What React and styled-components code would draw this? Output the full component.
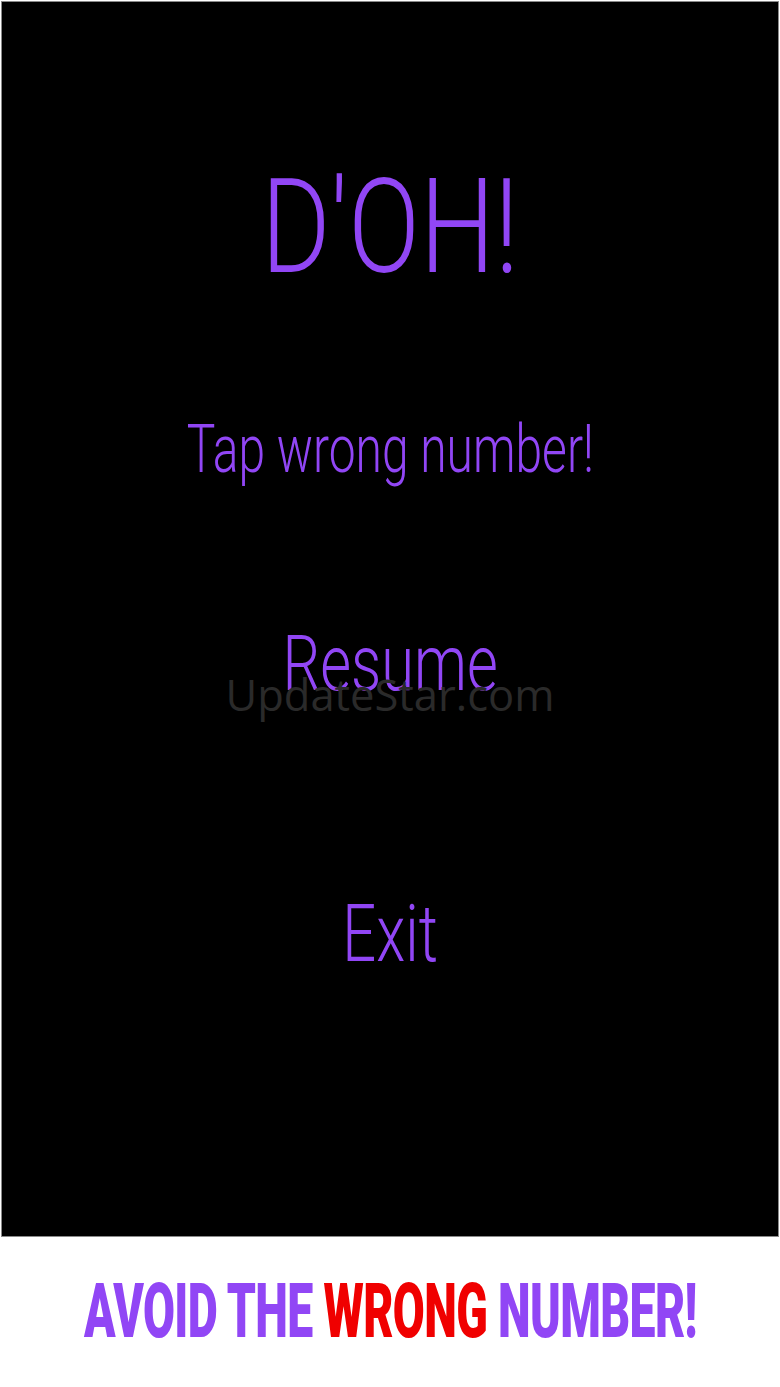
import React from "react";
import styled, { createGlobalStyle } from "styled-components";

const Global = createGlobalStyle`
  html, body { margin: 0; padding: 0; background: #ffffff; }
  body { width: 780px; height: 1387px; overflow: hidden; }
`;

const Page = styled.div`
  width: 780px;
  height: 1387px;
  display: flex;
  flex-direction: column;
  background: #ffffff;
`;

const Panel = styled.div`
  position: relative;
  margin: 1px 1px 0 1px;
  height: 1236px;
  box-sizing: border-box;
  border: 1px solid #8a8a8a;
  background: #000000;
  display: flex;
  flex-direction: column;
  align-items: center;
`;

const ThinText = styled.div`
  margin-top: ${(p) => p.$top}px;
  font-family: Roboto, "Liberation Sans", sans-serif;
  font-weight: 300;
  font-size: ${(p) => p.$size}px;
  line-height: 1;
  color: #9146f5;
  white-space: nowrap;
  transform: scaleX(${(p) => p.$sx});
  cursor: ${(p) => (p.$button ? "pointer" : "default")};
`;

const Watermark = styled.div`
  position: absolute;
  left: 0;
  right: 0;
  top: 671px;
  text-align: center;
  font-family: "Open Sans", "Noto Sans", sans-serif;
  font-size: 43.5px;
  line-height: 1;
  color: #2a2a2a;
  pointer-events: none;
`;

const Banner = styled.div`
  flex: 1;
  display: flex;
  align-items: center;
  justify-content: center;
  padding-bottom: 2px;
`;

const BannerText = styled.div`
  font-family: Roboto, "Liberation Sans", sans-serif;
  font-weight: 900;
  font-size: 76px;
  line-height: 1;
  white-space: nowrap;
  color: #9146f5;
  transform: scaleX(0.61);
  letter-spacing: -1px;
`;

const Red = styled.span`
  color: #f00000;
`;

export default function App() {
  return (
    <Page>
      <Global />
      <Panel>
        <ThinText $top={159} $size={132} $sx={0.8}>D'OH!</ThinText>
        <ThinText $top={123} $size={67} $sx={0.716}>Tap wrong number!</ThinText>
        <ThinText $top={143} $size={77} $sx={0.774} $button>Resume</ThinText>
        <ThinText $top={191} $size={80} $sx={0.745} $button>Exit</ThinText>
        <Watermark>UpdateStar.com</Watermark>
      </Panel>
      <Banner>
        <BannerText>
          AVOID THE <Red>WRONG</Red> NUMBER!
        </BannerText>
      </Banner>
    </Page>
  );
}
